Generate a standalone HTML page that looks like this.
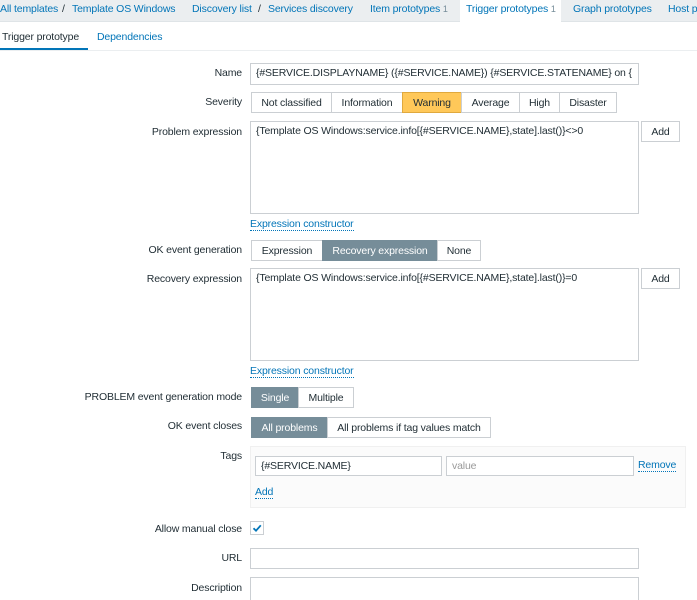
<!DOCTYPE html><html><head><style>
*{box-sizing:border-box;margin:0;padding:0}
html,body{width:697px;height:600px;overflow:hidden}
body{background:#fff;font-family:"Liberation Sans",Arial,sans-serif;font-size:10.5px;letter-spacing:-0.15px;color:#1f2c33;position:relative}
.a{position:absolute}
.top{left:0;top:0;width:697px;height:22px;background:#ebeef0;border-bottom:1px solid #dfe4e7}
.top span{position:absolute;top:3px;color:#0275b8;white-space:nowrap}
.top span span{position:static}
.lbl{position:absolute;right:455px;text-align:right;white-space:nowrap}
.inp{position:absolute;border:1px solid #cbcfd3;background:#fff;padding:3px 5px;white-space:nowrap;overflow:hidden}
.btn{position:absolute;border:1px solid #cbcfd3;background:#fff;text-align:center;padding-top:4px;white-space:nowrap}
.on{background:#768d99;color:#fff;border-color:#768d99}
.link{position:absolute;color:#0275b8;border-bottom:1px dotted #0275b8;line-height:12px}
</style></head><body>
<div class="a top">
<span style="left:0">All templates</span><span style="left:62px;color:#1f2c33">/</span><span style="left:72px">Template OS Windows</span>
<span style="left:192px">Discovery list</span><span style="left:258px;color:#1f2c33">/</span><span style="left:268px">Services discovery</span>
<span style="left:370px">Item prototypes <span style="color:#768d99;font-size:9px">1</span></span>
<div class="a" style="left:460px;top:0;width:101px;height:22px;background:#fff"></div>
<span style="left:466px">Trigger prototypes <span style="color:#768d99;font-size:9px">1</span></span>
<span style="left:573px">Graph prototypes</span><span style="left:668px">Host p</span>
</div>
<div class="a" style="left:2px;top:31px">Trigger prototype</div>
<div class="a" style="left:97px;top:31px;color:#0275b8">Dependencies</div>
<div class="a" style="left:0;top:48px;width:88px;height:2px;background:#0275b8"></div>
<div class="a" style="left:0;top:50px;width:697px;height:1px;background:#ebeef0"></div>

<div class="lbl" style="top:67px">Name</div>
<div class="inp" style="left:250px;top:63px;width:389px;height:22px">{#SERVICE.DISPLAYNAME} ({#SERVICE.NAME}) {#SERVICE.STATENAME} on {</div>

<div class="lbl" style="top:96px">Severity</div>
<div class="btn" style="left:251px;top:92px;width:81px;height:21px">Not classified</div>
<div class="btn" style="left:331px;top:92px;width:72px;height:21px">Information</div>
<div class="btn" style="left:402px;top:92px;width:60px;height:21px;background:#ffc859;border-color:#e0a93e">Warning</div>
<div class="btn" style="left:461px;top:92px;width:59px;height:21px">Average</div>
<div class="btn" style="left:519px;top:92px;width:41px;height:21px">High</div>
<div class="btn" style="left:559px;top:92px;width:58px;height:21px">Disaster</div>

<div class="lbl" style="top:126px">Problem expression</div>
<div class="inp" style="left:250px;top:121px;width:389px;height:93px">{Template OS Windows:service.info[{#SERVICE.NAME},state].last()}&lt;&gt;0</div>
<div class="btn" style="left:641px;top:121px;width:39px;height:21px">Add</div>
<div class="link" style="left:250px;top:218px">Expression constructor</div>

<div class="lbl" style="top:244px">OK event generation</div>
<div class="btn" style="left:251px;top:240px;width:72px;height:21px">Expression</div>
<div class="btn on" style="left:322px;top:240px;width:116px;height:21px">Recovery expression</div>
<div class="btn" style="left:437px;top:240px;width:44px;height:21px">None</div>

<div class="lbl" style="top:273px">Recovery expression</div>
<div class="inp" style="left:250px;top:268px;width:389px;height:93px">{Template OS Windows:service.info[{#SERVICE.NAME},state].last()}=0</div>
<div class="btn" style="left:641px;top:268px;width:39px;height:21px">Add</div>
<div class="link" style="left:250px;top:365px">Expression constructor</div>

<div class="lbl" style="top:391px">PROBLEM event generation mode</div>
<div class="btn on" style="left:251px;top:387px;width:48px;height:21px">Single</div>
<div class="btn" style="left:298px;top:387px;width:56px;height:21px">Multiple</div>

<div class="lbl" style="top:420px">OK event closes</div>
<div class="btn on" style="left:251px;top:417px;width:77px;height:21px">All problems</div>
<div class="btn" style="left:327px;top:417px;width:164px;height:21px">All problems if tag values match</div>

<div class="lbl" style="top:450px">Tags</div>
<div class="a" style="left:250px;top:446px;width:436px;height:62px;background:#fbfbfb;border:1px solid #f0f0f0"></div>
<div class="inp" style="left:255px;top:456px;width:187px;height:20px;padding-top:3px">{#SERVICE.NAME}</div>
<div class="inp" style="left:446px;top:456px;width:188px;height:20px;padding-top:3px;color:#999">value</div>
<div class="link" style="left:638px;top:459px">Remove</div>
<div class="link" style="left:255px;top:486px">Add</div>

<div class="lbl" style="top:523px">Allow manual close</div>
<div class="a" style="left:250px;top:521px;width:14px;height:14px;border:1px solid #cbcfd3;background:#fff">
<svg width="12" height="12" viewBox="0 0 12 12" style="position:absolute;left:0;top:0"><path d="M2.5 6.2 L5 8.7 L9.8 3.3" fill="none" stroke="#0275b8" stroke-width="1.8"/></svg></div>

<div class="lbl" style="top:552px">URL</div>
<div class="inp" style="left:250px;top:548px;width:389px;height:21px"></div>
<div class="lbl" style="top:582px">Description</div>
<div class="inp" style="left:250px;top:577px;width:389px;height:40px"></div>
</body></html>
